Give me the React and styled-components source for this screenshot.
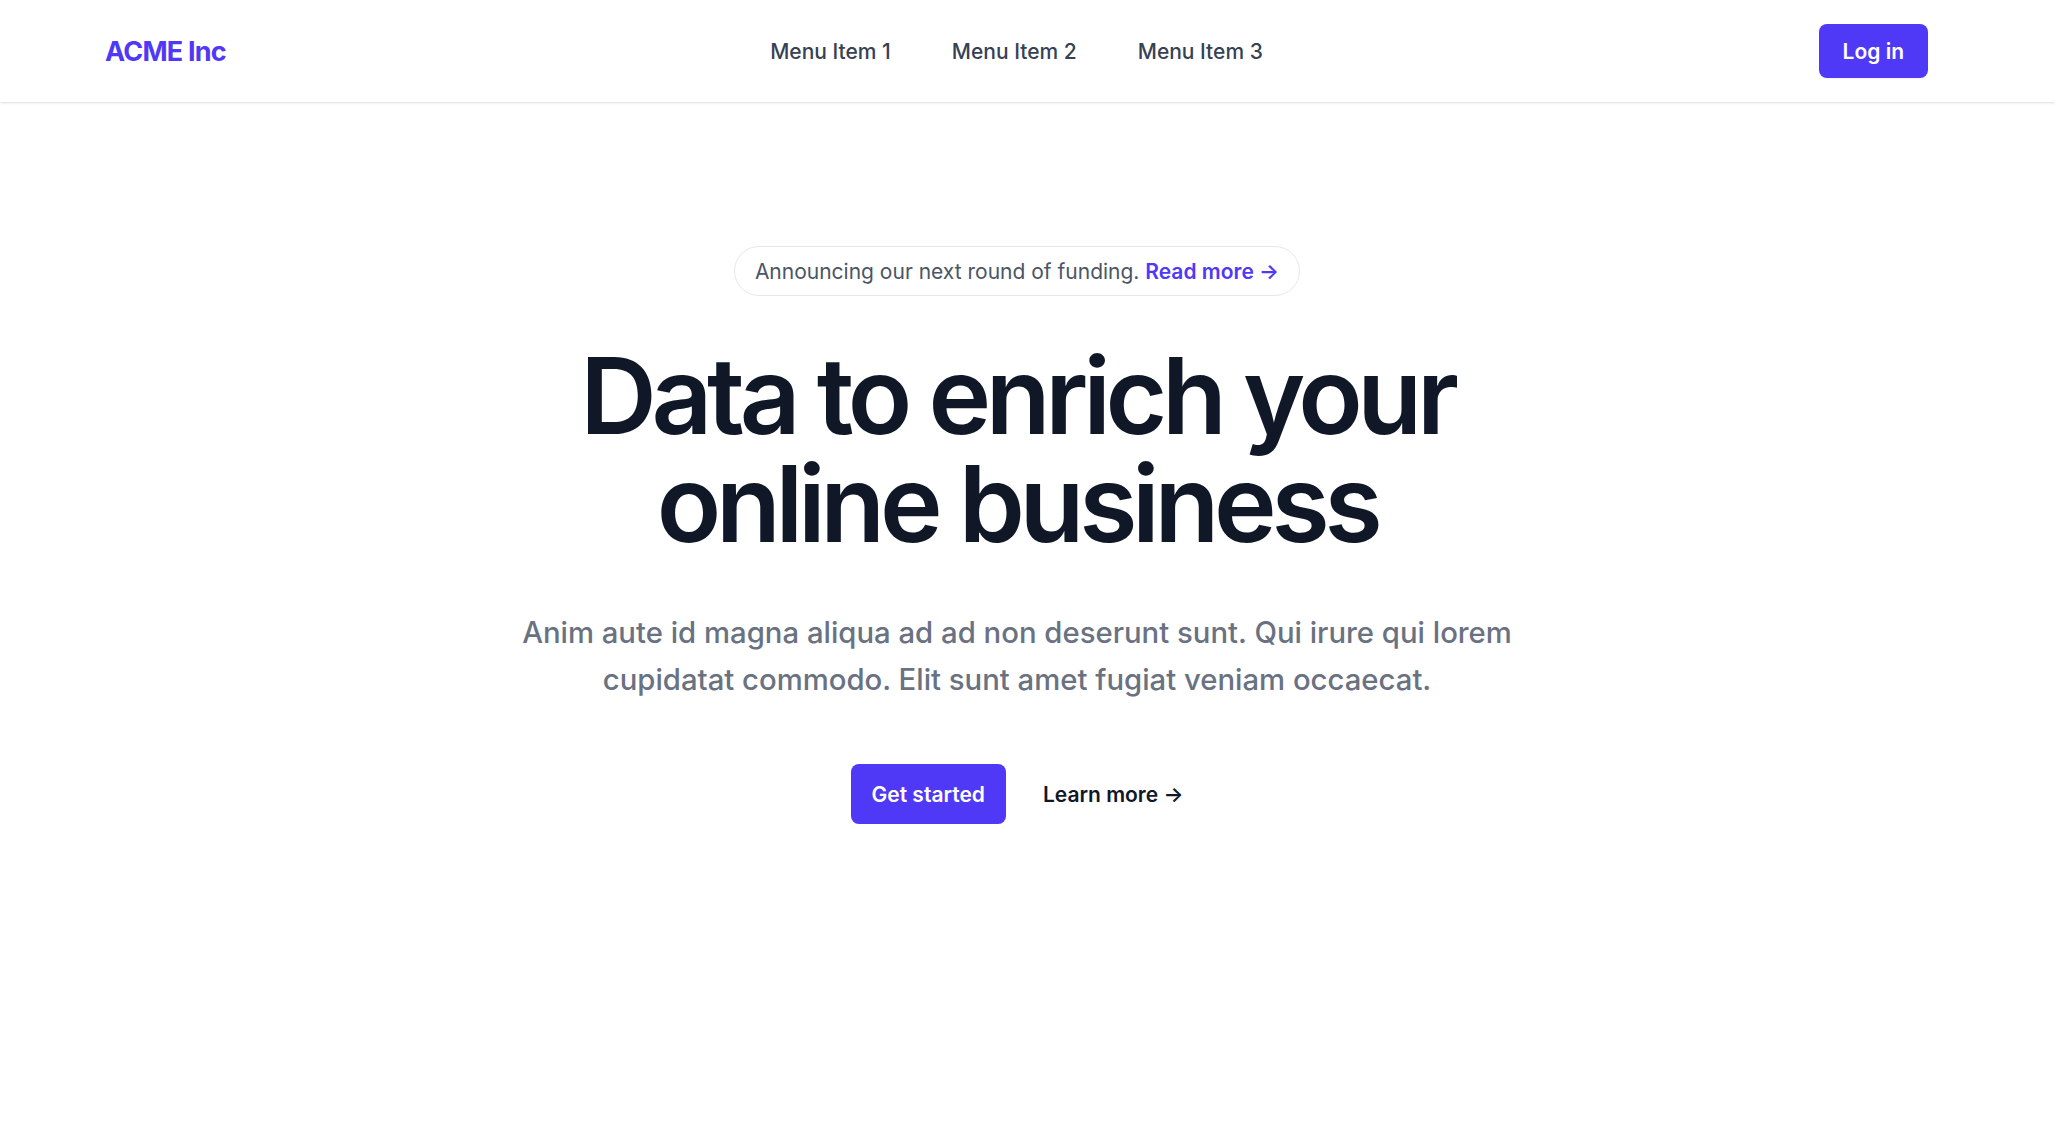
import styled, { createGlobalStyle } from "styled-components";

const GlobalStyle = createGlobalStyle`
    *, *::before, *::after {
        box-sizing: border-box;
    }

    body {
        margin: 0;
        background: #ffffff;
        font-family: Inter, "Noto Sans", "Liberation Sans", sans-serif;
        -webkit-font-smoothing: antialiased;
    }

    a {
        text-decoration: none;
    }
`;

const Header = styled.header`
    height: 102px;
    background: #ffffff;
    box-shadow: 0 1px 3px rgba(0, 0, 0, 0.1), 0 1px 2px -1px rgba(0, 0, 0, 0.1);
`;

const NavBar = styled.nav`
    height: 100%;
    padding: 0 127px 0 105px;
    display: flex;
    align-items: center;
`;

const Logo = styled.a`
    flex: 1;
    font-size: 27px;
    font-weight: 700;
    letter-spacing: -0.03em;
    color: #4f39f6;
`;

const MenuList = styled.div`
    display: flex;
    gap: 61px;
`;

const MenuLink = styled.a`
    font-size: 21px;
    font-weight: 500;
    line-height: 31px;
    color: #364153;
`;

const LoginWrap = styled.div`
    flex: 1;
    display: flex;
    justify-content: flex-end;
`;

const Button = styled.a`
    display: inline-flex;
    align-items: center;
    justify-content: center;
    height: ${(p) => p.$height}px;
    padding: 0 ${(p) => p.$padX}px;
    border-radius: 8px;
    background: #4f39f6;
    color: #ffffff;
    font-size: 21px;
    font-weight: 600;
    box-shadow: 0 1px 2px rgba(0, 0, 0, 0.05);
`;

const Hero = styled.main`
    padding: 144px 21px 0 0;
    display: flex;
    flex-direction: column;
    align-items: center;
    text-align: center;
`;

const Announcement = styled.div`
    height: 50px;
    padding: 0 20px;
    display: flex;
    align-items: center;
    gap: 0.28em;
    border: 1px solid #e6e7ea;
    border-radius: 9999px;
    font-size: 21px;
    color: #4a5565;
`;

const TextLink = styled.a`
    font-weight: 600;
    color: ${(p) => p.$color};
    font-size: 21px;
`;

const Title = styled.h1`
    margin: 46px 0 0;
    max-width: 930px;
    font-size: 106px;
    line-height: 1.02;
    font-weight: 600;
    letter-spacing: -0.05em;
    color: #101828;
`;

const Lead = styled.p`
    margin: 51px 0 0;
    max-width: 1012px;
    font-size: 29.3px;
    line-height: 47px;
    font-weight: 500;
    color: #6a7282;
`;

const Actions = styled.div`
    margin-top: 61px;
    display: flex;
    align-items: center;
    gap: 37px;
`;

export default function App() {
    return (
        <>
            <GlobalStyle />
            <Header>
                <NavBar>
                    <Logo href="#">ACME Inc</Logo>
                    <MenuList>
                        <MenuLink href="#">Menu Item 1</MenuLink>
                        <MenuLink href="#">Menu Item 2</MenuLink>
                        <MenuLink href="#">Menu Item 3</MenuLink>
                    </MenuList>
                    <LoginWrap>
                        <Button href="#" $height={54} $padX={24}>
                            Log in
                        </Button>
                    </LoginWrap>
                </NavBar>
            </Header>
            <Hero>
                <Announcement>
                    <span>Announcing our next round of funding.</span>
                    <TextLink href="#" $color="#4f39f6">
                        Read more →
                    </TextLink>
                </Announcement>
                <Title>Data to enrich your online business</Title>
                <Lead>
                    Anim aute id magna aliqua ad ad non deserunt sunt. Qui
                    irure qui lorem cupidatat commodo. Elit sunt amet fugiat
                    veniam occaecat.
                </Lead>
                <Actions>
                    <Button href="#" $height={60} $padX={21}>
                        Get started
                    </Button>
                    <TextLink href="#" $color="#101828">
                        Learn more →
                    </TextLink>
                </Actions>
            </Hero>
        </>
    );
}
